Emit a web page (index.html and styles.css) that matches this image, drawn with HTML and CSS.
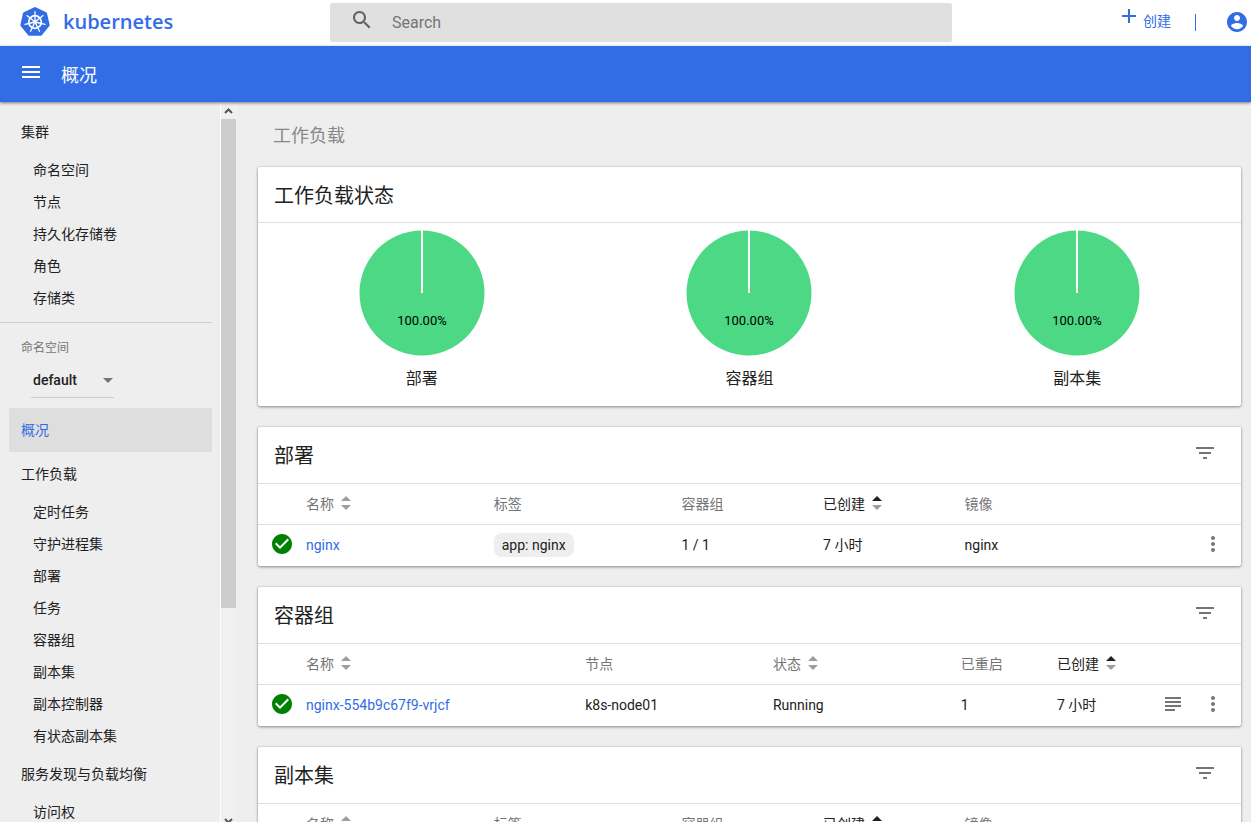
FILE: index.html
```html
<!DOCTYPE html>
<html lang="zh-CN">
<head>
<meta charset="utf-8">
<title>Kubernetes Dashboard</title>
<link rel="stylesheet" href="styles.css">
</head>
<body>
<svg class="sprite" aria-hidden="true">
  <symbol id="i-sort" viewBox="0 0 10 16"><path class="sort-up" d="M0 6 5 1l5 5z"/><path class="sort-down" d="M0 10h10l-5 5z"/></symbol>
  <symbol id="i-filter" viewBox="0 0 24 24"><path d="M10 18h4v-2h-4v2zM3 6v2h18V6H3zm3 7h12v-2H6v2z"/></symbol>
  <symbol id="i-more" viewBox="0 0 24 24"><path d="M12 8c1.1 0 2-.9 2-2s-.9-2-2-2-2 .9-2 2 .9 2 2 2zm0 2c-1.1 0-2 .9-2 2s.9 2 2 2 2-.9 2-2-.9-2-2-2zm0 6c-1.1 0-2 .9-2 2s.9 2 2 2 2-.9 2-2-.9-2-2-2z"/></symbol>
  <symbol id="i-logs" viewBox="0 0 24 24"><path d="M4 5h16v2H4zm0 4h16v2H4zm0 4h16v2H4zm0 4h10v2H4z"/></symbol>
  <symbol id="i-ok" viewBox="0 0 24 24"><path d="M12 2C6.48 2 2 6.48 2 12s4.480 10 10 10 10-4.480 10-10S17.520 2 12 2zm-2 15l-5-5 1.410-1.410L10 14.170l7.590-7.590L19 8l-9 9z"/></symbol>
</svg>
<div class="app">
  <header class="topbar">
    <a class="brand" href="#">
      <svg class="brand-mark" viewBox="-16 -16 32 32" aria-hidden="true">
        <path class="brand-body" d="M0-13.500 10.550-8.420 13.160 3 5.860 12.160H-5.860L-13.160 3-10.550-8.420z"/>
        <g class="brand-wheel">
          <circle r="6.300"/>
          <path d="M0 0V-10.300M0 0 8.050-6.420M0 0 10 2.300M0 0 4.470 9.280M0 0-4.470 9.280M0 0-10 2.300M0 0-8.050-6.420"/>
        </g>
        <circle class="brand-hub" r="1.800"/>
      </svg>
      <span class="brand-name">kubernetes</span>
    </a>
    <form class="search" role="search">
      <svg class="icon" viewBox="0 0 24 24" aria-hidden="true"><path d="M15.500 14h-.790l-.280-.270C15.410 12.590 16 11.110 16 9.500 16 5.910 13.090 3 9.500 3S3 5.910 3 9.500 5.910 16 9.500 16c1.610 0 3.090-.590 4.230-1.570l.270.280v.790l5 4.990L20.490 19l-4.990-5zm-6 0C7.010 14 5 11.990 5 9.500S7.010 5 9.500 5 14 7.010 14 9.500 11.990 14 9.500 14z"/></svg>
      <input class="search-input" type="text" placeholder="Search" aria-label="Search">
    </form>
    <div class="actions">
      <button class="create" type="button">
        <svg class="icon plus" viewBox="0 0 24 24" aria-hidden="true"><path d="M19 13h-6v6h-2v-6H5v-2h6V5h2v6h6v2z"/></svg>
        <span>创建</span>
      </button>
      <span class="separator"></span>
      <button class="account" type="button" aria-label="Account">
        <svg class="icon" viewBox="0 0 24 24" aria-hidden="true"><path d="M12 2C6.480 2 2 6.480 2 12s4.480 10 10 10 10-4.480 10-10S17.520 2 12 2zm0 3c1.660 0 3 1.340 3 3s-1.340 3-3 3-3-1.340-3-3 1.340-3 3-3zm0 14.200c-2.500 0-4.710-1.280-6-3.220.030-1.990 4-3.080 6-3.080 1.990 0 5.970 1.090 6 3.080-1.290 1.940-3.500 3.220-6 3.220z"/></svg>
      </button>
    </div>
  </header>
  <div class="titlebar">
    <button class="menu-button" type="button" aria-label="Menu">
      <svg class="icon" viewBox="0 0 24 24" aria-hidden="true"><path d="M3 18h18v-2H3v2zm0-5h18v-2H3v2zm0-7v2h18V6H3z"/></svg>
    </button>
    <h1 class="page-title">概况</h1>
  </div>
  <div class="body">
    <nav class="sidebar">
      <a class="nav-group" href="#">集群</a>
      <a class="nav-item" href="#">命名空间</a>
      <a class="nav-item" href="#">节点</a>
      <a class="nav-item" href="#">持久化存储卷</a>
      <a class="nav-item" href="#">角色</a>
      <a class="nav-item" href="#">存储类</a>
      <div class="namespace">
        <label class="namespace-label" for="namespace">命名空间</label>
        <div class="select-box">
          <select id="namespace" class="select"><option>default</option></select>
          <svg class="caret" viewBox="0 0 10 5" aria-hidden="true"><path d="M0 0h10L5 5z"/></svg>
        </div>
      </div>
      <a class="nav-group active" href="#">概况</a>
      <a class="nav-group" href="#">工作负载</a>
      <a class="nav-item" href="#">定时任务</a>
      <a class="nav-item" href="#">守护进程集</a>
      <a class="nav-item" href="#">部署</a>
      <a class="nav-item" href="#">任务</a>
      <a class="nav-item" href="#">容器组</a>
      <a class="nav-item" href="#">副本集</a>
      <a class="nav-item" href="#">副本控制器</a>
      <a class="nav-item" href="#">有状态副本集</a>
      <a class="nav-group" href="#">服务发现与负载均衡</a>
      <a class="nav-item" href="#">访问权</a>
    </nav>
    <div class="scrollbar" aria-hidden="true">
      <svg class="scroll-arrow" viewBox="0 0 15 17"><path d="M4 11l3.500-3.500L11 11"/></svg>
      <div class="scroll-track"><div class="scroll-thumb"></div></div>
      <svg class="scroll-arrow" viewBox="0 0 15 17"><path d="M4 14l3.500 3.500L11 14"/></svg>
    </div>
    <main class="main">
      <h2 class="section-title">工作负载</h2>

      <section class="card">
        <div class="card-head status-head"><h3 class="card-title">工作负载状态</h3></div>
        <div class="charts">
          <figure class="chart">
            <svg class="pie" viewBox="0 0 126 126"><circle cx="63" cy="63" r="62.500"/><path d="M63 63V0"/><text x="63" y="95">100.00%</text></svg>
            <figcaption class="chart-label">部署</figcaption>
          </figure>
          <figure class="chart">
            <svg class="pie" viewBox="0 0 126 126"><circle cx="63" cy="63" r="62.500"/><path d="M63 63V0"/><text x="63" y="95">100.00%</text></svg>
            <figcaption class="chart-label">容器组</figcaption>
          </figure>
          <figure class="chart">
            <svg class="pie" viewBox="0 0 126 126"><circle cx="63" cy="63" r="62.500"/><path d="M63 63V0"/><text x="63" y="95">100.00%</text></svg>
            <figcaption class="chart-label">副本集</figcaption>
          </figure>
        </div>
      </section>

      <section class="card">
        <div class="card-head">
          <h3 class="card-title">部署</h3>
          <button class="icon-button" type="button" aria-label="过滤"><svg class="icon"><use href="#i-filter"/></svg></button>
        </div>
        <table class="table">
          <colgroup><col class="col-status"><col class="col-m"><col class="col-m"><col class="col-s"><col class="col-s"><col></colgroup>
          <thead>
            <tr><th></th>
              <th><button class="sort" type="button">名称<svg class="sort-icon"><use href="#i-sort"/></svg></button></th>
              <th>标签</th><th>容器组</th>
              <th><button class="sort sorted" type="button">已创建<svg class="sort-icon"><use href="#i-sort"/></svg></button></th>
              <th>镜像</th></tr>
          </thead>
          <tbody>
            <tr><td class="status"><svg class="icon ok"><use href="#i-ok"/></svg></td>
              <td><a class="link" href="#">nginx</a></td>
              <td><span class="chip">app: nginx</span></td>
              <td>1 / 1</td><td>7 小时</td>
              <td><div class="last"><span>nginx</span><button class="icon-button" type="button" aria-label="更多"><svg class="icon"><use href="#i-more"/></svg></button></div></td></tr>
          </tbody>
        </table>
      </section>

      <section class="card">
        <div class="card-head">
          <h3 class="card-title">容器组</h3>
          <button class="icon-button" type="button" aria-label="过滤"><svg class="icon"><use href="#i-filter"/></svg></button>
        </div>
        <table class="table">
          <colgroup><col class="col-status"><col class="col-l"><col class="col-m"><col class="col-m"><col class="col-xs"><col></colgroup>
          <thead>
            <tr><th></th>
              <th><button class="sort" type="button">名称<svg class="sort-icon"><use href="#i-sort"/></svg></button></th>
              <th>节点</th>
              <th><button class="sort" type="button">状态<svg class="sort-icon"><use href="#i-sort"/></svg></button></th>
              <th>已重启</th>
              <th><button class="sort sorted" type="button">已创建<svg class="sort-icon"><use href="#i-sort"/></svg></button></th></tr>
          </thead>
          <tbody>
            <tr><td class="status"><svg class="icon ok"><use href="#i-ok"/></svg></td>
              <td><a class="link" href="#">nginx-554b9c67f9-vrjcf</a></td>
              <td>k8s-node01</td><td>Running</td><td>1</td>
              <td><div class="last"><span>7 小时</span><button class="icon-button" type="button" aria-label="日志"><svg class="icon"><use href="#i-logs"/></svg></button><button class="icon-button" type="button" aria-label="更多"><svg class="icon"><use href="#i-more"/></svg></button></div></td></tr>
          </tbody>
        </table>
      </section>

      <section class="card">
        <div class="card-head">
          <h3 class="card-title">副本集</h3>
          <button class="icon-button" type="button" aria-label="过滤"><svg class="icon"><use href="#i-filter"/></svg></button>
        </div>
        <table class="table">
          <colgroup><col class="col-status"><col class="col-m"><col class="col-m"><col class="col-s"><col class="col-s"><col></colgroup>
          <thead>
            <tr><th></th>
              <th><button class="sort" type="button">名称<svg class="sort-icon"><use href="#i-sort"/></svg></button></th>
              <th>标签</th><th>容器组</th>
              <th><button class="sort sorted" type="button">已创建<svg class="sort-icon"><use href="#i-sort"/></svg></button></th>
              <th>镜像</th></tr>
          </thead>
        </table>
      </section>
    </main>
  </div>
</div>
</body>
</html>
```
FILE: styles.css
```css
* { box-sizing: border-box; }
body {
  margin: 0;
  background: #eee;
  color: #212121;
  font: 14px/20px Roboto, "Noto Sans CJK SC", sans-serif;
}
h1, h2, h3, figure { margin: 0; font-weight: 400; }
a { color: inherit; text-decoration: none; }
button { border: 0; padding: 0; background: none; color: inherit; font: inherit; display: flex; align-items: center; cursor: pointer; }
.sprite { display: none; }
.icon { width: 24px; height: 24px; fill: currentColor; flex: none; display: block; }

.app { display: flex; flex-direction: column; height: 100vh; overflow: hidden; }

/* top bar */
.topbar { display: flex; align-items: flex-start; flex: none; height: 46px; background: #fff; color: #326de6; }
.brand { display: flex; align-items: center; gap: 12px; width: 330px; height: 44px; padding-left: 19px; }
.brand-mark { width: 32px; height: 32px; }
.brand-body { fill: #326de6; stroke: #326de6; stroke-width: 3; stroke-linejoin: round; }
.brand-wheel { fill: none; stroke: #fff; stroke-width: 1.3; stroke-linecap: round; }
.brand-wheel circle { stroke-width: 1.7; }
.brand-hub { fill: #fff; }
.brand-name { font: 600 20px/24px "Open Sans", sans-serif; }
.search { display: flex; align-items: flex-start; flex: 1; gap: 18px; height: 39px; margin-top: 3px; padding: 5px 20px; background: #e0e0e0; border-radius: 2px; color: #616161; }
.search-input { flex: 1; min-width: 0; height: 30px; border: 0; padding: 0; outline: 0; background: none; color: #212121; font: 16px/30px Roboto, sans-serif; }
.search-input::placeholder { color: #757575; opacity: 1; }
.actions { display: flex; align-items: center; justify-content: flex-end; width: 299px; height: 44px; padding-right: 2px; }
.create { gap: 2px; padding-bottom: 2px; }
.plus { margin-bottom: 10px; }
.separator { width: 1px; height: 17px; margin: 0 29px 0 24px; background: #326de6; }

/* title bar */
.titlebar { display: flex; align-items: center; gap: 18px; flex: none; height: 56px; padding: 0 19px; background: #326de6; color: #fff; box-shadow: 0 1px 3px rgba(0, 0, 0, .5); z-index: 1; }
.menu-button { margin-bottom: 4px; }
.page-title { padding-top: 4px; font-size: 18px; line-height: 24px; }

/* sidebar */
.body { display: flex; flex: 1; min-height: 0; overflow: hidden; }
.sidebar { flex: none; width: 221px; height: 100%; padding: 8px 8px 0 0; border-right: 1px solid #fff; overflow: hidden; }
.nav-group { display: block; margin-left: 9px; padding: 12px; border-radius: 2px; }
.nav-item { display: block; padding: 6px 0 6px 33px; }
.active { background: #dedede; color: #326de6; }
.namespace { margin-top: 8px; border-top: 1px solid #cfcfcf; padding: 15px 21px 10px; }
.namespace-label { display: block; color: #757575; font-size: 12px; }
.select-box { display: grid; align-items: center; width: 83px; height: 35px; margin: 5px 0 0 10px; border-bottom: 1px solid #ccc; }
.select { grid-area: 1 / 1; appearance: none; width: 100%; height: 34px; border: 0; padding: 0 2px; background: none; color: #212121; font: 500 14px/20px Roboto, sans-serif; }
.caret { grid-area: 1 / 1; justify-self: end; width: 10px; height: 5px; margin-right: 1px; fill: #757575; pointer-events: none; }
.scrollbar { display: flex; flex-direction: column; flex: none; width: 16px; background: #f0f0f0; padding-right: 1px; }
.scroll-arrow { flex: none; width: 15px; height: 17px; fill: none; stroke: #555; stroke-width: 2; }
.scroll-track { flex: 1; }
.scroll-thumb { height: 71.3%; background: #cdcdcd; }

/* main */
.main { flex: 1; min-width: 0; padding: 22px 10px 0 21px; }
.section-title { margin: 0 0 19px 15px; color: #888; font-size: 18px; line-height: 24px; }
.card { margin-bottom: 21px; background: #fff; border-radius: 2px; box-shadow: 0 1px 3px rgba(0, 0, 0, .4), 0 0 2px rgba(0, 0, 0, .15); }
.card-head { display: flex; align-items: center; justify-content: space-between; height: 57px; padding: 0 24px 0 16px; border-bottom: 1px solid #e0e0e0; }
.status-head { height: 56px; }
.card-title { padding-top: 2px; font-size: 20px; line-height: 28px; }
.card-head .icon-button { margin-bottom: 4px; }
.charts { display: grid; grid-template-columns: repeat(3, 1fr); padding: 7px 0 15px; }
.chart { display: flex; flex-direction: column; align-items: center; gap: 11px; }
.pie { width: 126px; height: 126px; display: block; }
.pie circle { fill: #4dd885; }
.pie path { stroke: #fff; stroke-width: 2; }
.pie text { font: 13px Roboto, sans-serif; fill: #000; text-anchor: middle; }
.chart-label { font-size: 16px; line-height: 24px; }

.table { width: 100%; table-layout: fixed; border-collapse: separate; border-spacing: 0; }
.table th, .table td { height: 41px; padding: 0; text-align: left; font-weight: 400; white-space: nowrap; }
.table th { padding-bottom: 1px; color: #757575; border-bottom: 1px solid #e0e0e0; }
.table td { padding-bottom: 1px; }
.col-status { width: 48px; }
.col-xs { width: 9.8%; }
.col-s { width: 14.4%; }
.col-m { width: 19.1%; }
.col-l { width: 28.4%; }
.sort { gap: 7px; }
.sort-icon { width: 10px; height: 16px; fill: #9e9e9e; margin-bottom: 2px; }
.sorted { color: #212121; --sort-up: #212121; }
.sort-up { fill: var(--sort-up, #9e9e9e); }
.icon-button { color: #757575; }
.ok { color: #008000; margin: 0 0 2px 12px; }
.link { color: #326de6; }
.chip { display: inline-block; padding: 2px 8px; border-radius: 8px; background: #eee; }
.last { display: flex; align-items: center; gap: 16px; padding-right: 16px; }
.last span { flex: 1; }
.last .icon { margin-bottom: 2px; }
```
